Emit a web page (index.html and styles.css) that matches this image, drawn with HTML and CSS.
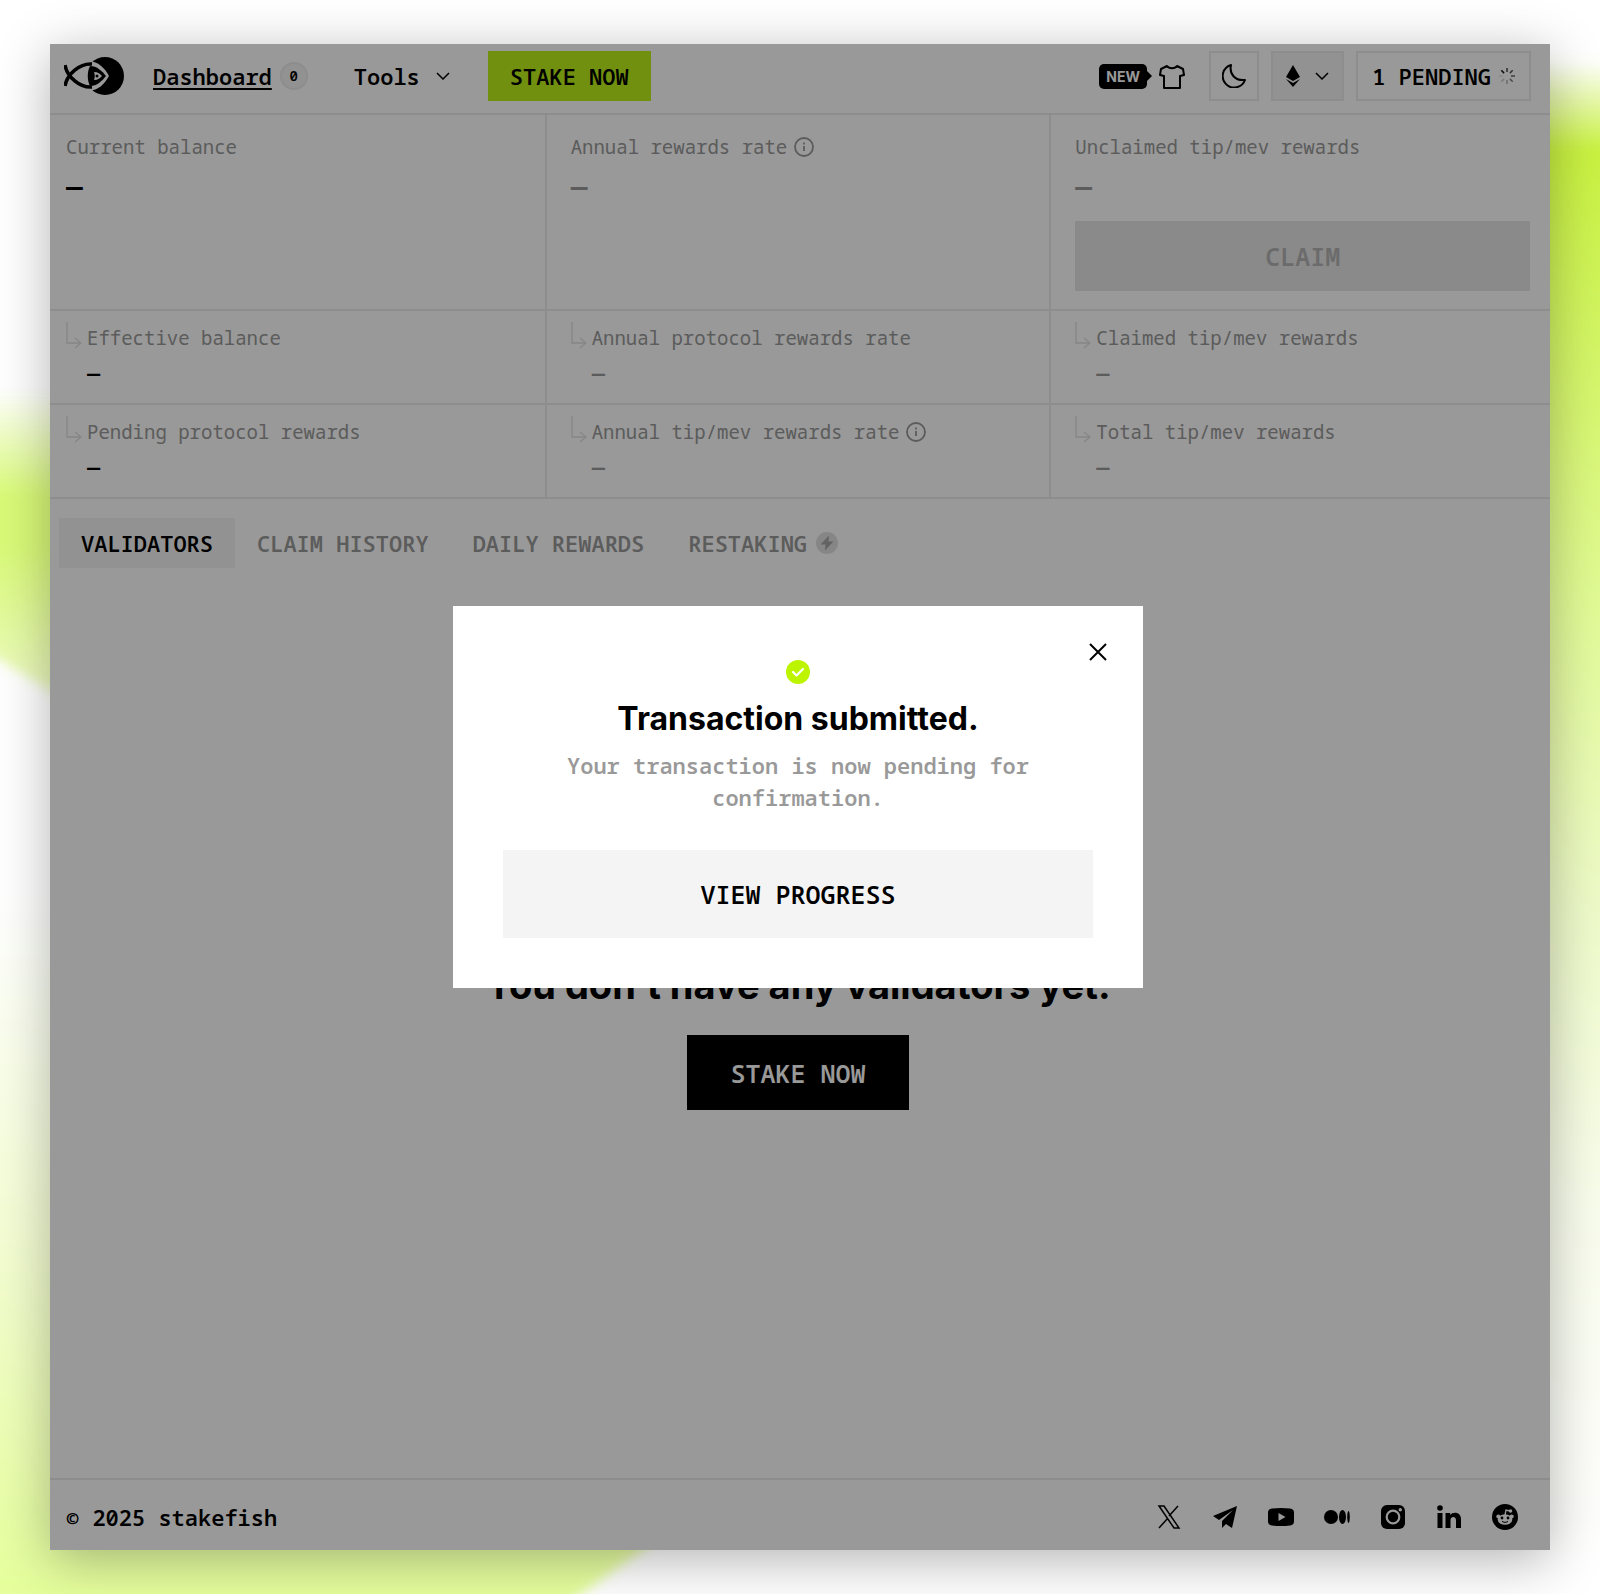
FILE: index.html
```
<!DOCTYPE html>
<html lang="en">
<head>
    <meta charset="UTF-8">
    <meta name="viewport" content="width=device-width,initial-scale=1.0">
    <title>Dashboard | stakefish</title>
    <link rel="stylesheet" href="styles.css">
</head>
<body>
    <svg class="sprite" aria-hidden="true">
        <symbol id="branch" viewBox="0 0 16 28">
            <path d="M1 0v21h14M9 16l6 5-6 5" fill="none" stroke="currentColor" stroke-width="1.4"/>
        </symbol>
        <symbol id="info" viewBox="0 0 20 20">
            <circle cx="10" cy="10" r="9" fill="none" stroke="currentColor" stroke-width="1.8"/>
            <path d="M10 9v5M10 5.6v1.8" stroke="currentColor" stroke-width="1.8"/>
        </symbol>
        <symbol id="chevron" viewBox="0 0 14 8">
            <path d="M1 1l6 6 6-6" fill="none" stroke="currentColor" stroke-width="1.5"/>
        </symbol>
    </svg>
    <div class="glow">
        <div class="blob blob-left"></div>
        <div class="blob blob-bottom"></div>
        <div class="blob blob-right"></div>
    </div>
    <div class="window">
        <header class="header">
            <a class="logo" href="#" aria-label="stakefish">
                <svg width="60" height="38" viewBox="0 0 60 38">
                    <circle cx="41" cy="19" r="19"/>
                    <path d="M20 5c12-3 20 5 25 14-5 9-13 17-25 14z" fill="#fff"/>
                    <path d="M28 7C16 6 3 17 1 29M1 8c2 12 15 23 27 22" fill="none" stroke="#000" stroke-width="3.5"/>
                    <path d="M26 9c7 0 12 5 16 10-4 5-9 10-16 10-3-6-3-14 0-20z"/>
                    <path d="M30 15c4 0 6 2 8 4-2 2-4 4-8 4 1-3 1-5 0-8z" fill="#fff"/>
                    <circle cx="33" cy="19" r="1.5"/>
                </svg>
            </a>
            <nav class="nav">
                <a class="nav-link active" href="#">Dashboard</a>
                <span class="count">0</span>
                <button class="nav-link tools" type="button">Tools <svg width="14" height="8"><use href="#chevron"/></svg></button>
                <button class="btn-stake" type="button">STAKE NOW</button>
            </nav>
            <div class="header-right">
                <a class="merch" href="#" aria-label="Merch">
                    <span class="new-tag">NEW</span>
                    <svg width="26" height="25" viewBox="0 0 26 25"><path d="M8 2c2 3 8 3 10 0l6 3 1 6-4 1v12H5V12l-4-1 1-6z" fill="none" stroke="#000" stroke-width="2" stroke-linejoin="round"/></svg>
                </a>
                <button class="btn-box" type="button" aria-label="Dark mode">
                    <svg width="24" height="24" viewBox="0 0 24 24"><path d="M9 1C7 10 13 17 23 16A11.500 11.500 0 1 1 9 1z" fill="none" stroke="#000" stroke-width="2" stroke-linejoin="round"/></svg>
                </button>
                <button class="btn-box network" type="button" aria-label="Network">
                    <svg width="14" height="22" viewBox="0 0 14 22"><path d="M7 0l7 12-7 4-7-4zM0 14l7 4 7-4-7 8z"/></svg>
                    <svg width="14" height="8"><use href="#chevron"/></svg>
                </button>
                <button class="btn-box pending" type="button">1 PENDING
                    <svg width="16" height="16" viewBox="0 0 16 16" stroke="#000" stroke-width="1.500">
                        <path d="M8 0v4" opacity=".7"/><path d="M13.700 2.300l-2.800 2.800" opacity=".65"/><path d="M16 8h-4" opacity=".6"/><path d="M13.700 13.700l-2.800-2.800" opacity=".5"/>
                        <path d="M8 16v-4" opacity=".3"/><path d="M2.300 13.700l2.800-2.800" opacity=".2"/><path d="M0 8h4" opacity=".1"/><path d="M2.300 2.300l2.800 2.800" opacity=".9"/>
                    </svg>
                </button>
            </div>
        </header>
        <main class="main">
            <section class="stats stats-top">
                <div class="stat">
                    <div class="stat-label">Current balance</div>
                    <div class="stat-value dark">—</div>
                </div>
                <div class="stat">
                    <div class="stat-label">Annual rewards rate <svg width="20" height="20"><use href="#info"/></svg></div>
                    <div class="stat-value">—</div>
                </div>
                <div class="stat">
                    <div class="stat-label">Unclaimed tip/mev rewards</div>
                    <div class="stat-value">—</div>
                    <button class="btn-claim" type="button" disabled>CLAIM</button>
                </div>
            </section>
            <section class="stats stats-sub">
                <div class="stat">
                    <svg class="branch" width="16" height="28"><use href="#branch"/></svg>
                    <div>
                        <div class="stat-label">Effective balance</div>
                        <div class="stat-value dark">—</div>
                    </div>
                </div>
                <div class="stat">
                    <svg class="branch" width="16" height="28"><use href="#branch"/></svg>
                    <div>
                        <div class="stat-label">Annual protocol rewards rate</div>
                        <div class="stat-value">—</div>
                    </div>
                </div>
                <div class="stat">
                    <svg class="branch" width="16" height="28"><use href="#branch"/></svg>
                    <div>
                        <div class="stat-label">Claimed tip/mev rewards</div>
                        <div class="stat-value">—</div>
                    </div>
                </div>
            </section>
            <section class="stats stats-sub">
                <div class="stat">
                    <svg class="branch" width="16" height="28"><use href="#branch"/></svg>
                    <div>
                        <div class="stat-label">Pending protocol rewards</div>
                        <div class="stat-value dark">—</div>
                    </div>
                </div>
                <div class="stat">
                    <svg class="branch" width="16" height="28"><use href="#branch"/></svg>
                    <div>
                        <div class="stat-label">Annual tip/mev rewards rate <svg width="20" height="20"><use href="#info"/></svg></div>
                        <div class="stat-value">—</div>
                    </div>
                </div>
                <div class="stat">
                    <svg class="branch" width="16" height="28"><use href="#branch"/></svg>
                    <div>
                        <div class="stat-label">Total tip/mev rewards</div>
                        <div class="stat-value">—</div>
                    </div>
                </div>
            </section>
            <div class="tabs">
                <button class="tab active" type="button">VALIDATORS</button>
                <button class="tab" type="button">CLAIM HISTORY</button>
                <button class="tab" type="button">DAILY REWARDS</button>
                <button class="tab" type="button">RESTAKING
                    <svg width="22" height="22" viewBox="0 0 22 22"><circle cx="11" cy="11" r="11" fill="#e0e0e0"/><path d="M13 3.500L4.500 12.500h5L9 18.500l8.500-9h-5z" fill="#a6a6a6"/></svg>
                </button>
            </div>
            <section class="empty">
                <h2 class="empty-title">You don’t have any validators yet.</h2>
                <button class="btn-dark" type="button">STAKE NOW</button>
            </section>
        </main>
        <footer class="footer">
            <div>© 2025 stakefish</div>
            <div class="social">
                <a href="#" aria-label="X"><svg viewBox="0 0 26 26"><path d="M3 2h5l15 22h-5zM22 2l-9 10M3 24l9-10" fill="none" stroke="#000" stroke-width="1.500"/></svg></a>
                <a href="#" aria-label="Telegram"><svg viewBox="0 0 26 26"><path d="M25 2L1 12l6 4L21 6 10 17v7l4-4 6 4z"/></svg></a>
                <a href="#" aria-label="YouTube"><svg viewBox="0 0 26 26"><path fill-rule="evenodd" d="M4 4.500Q13 3.500 22 4.500q4 .5 4 4v9q0 3.500-4 4-9 1-18 0-4-.5-4-4v-9q0-3.500 4-4zM10.500 9v8l7-4z"/></svg></a>
                <a href="#" aria-label="Medium"><svg viewBox="0 0 26 26"><circle cx="7" cy="13" r="7"/><ellipse cx="18.500" cy="13" rx="3.500" ry="7"/><ellipse cx="24.500" cy="13" rx="1.300" ry="6"/></svg></a>
                <a href="#" aria-label="Instagram"><svg viewBox="0 0 26 26"><rect x="1" y="1" width="24" height="24" rx="6"/><circle cx="13" cy="13" r="6.300" fill="none" stroke="#fff" stroke-width="2.200"/><circle cx="20.300" cy="5.700" r="1.700" fill="#fff"/></svg></a>
                <a href="#" aria-label="LinkedIn"><svg viewBox="0 0 26 26"><circle cx="4" cy="4" r="2.800"/><path d="M1.500 9h5v15h-5zM9.500 9h4.700v2c3-4 10.800-3 10.800 4v9h-5v-8c0-4-5.500-4-5.500 0v8h-5z"/></svg></a>
                <a href="#" aria-label="Reddit"><svg viewBox="0 0 26 26"><circle cx="13" cy="13" r="13"/><path d="M13 11l1-5 4 1" fill="none" stroke="#fff" stroke-width="1.300"/><g fill="#fff"><circle cx="18.500" cy="7" r="1.800"/><circle cx="6.300" cy="12.500" r="2"/><circle cx="19.700" cy="12.500" r="2"/><ellipse cx="13" cy="15.500" rx="7.300" ry="5.300"/></g><circle cx="10" cy="14" r="1.400"/><circle cx="16" cy="14" r="1.400"/><path d="M10 17.500q3 2 6 0" fill="none" stroke="#000"/></svg></a>
            </div>
        </footer>
        <div class="overlay">
            <div class="modal" role="dialog" aria-modal="true" aria-labelledby="modal-title">
                <button class="modal-close" type="button" aria-label="Close">
                    <svg width="18" height="18" viewBox="0 0 18 18"><path d="M1 1l16 16M17 1L1 17" stroke="#000" stroke-width="2"/></svg>
                </button>
                <svg width="24" height="24" viewBox="0 0 24 24"><circle cx="12" cy="12" r="12" fill="#bdf400"/><path d="M7 12l3.500 3.500L17 9" fill="none" stroke="#fff" stroke-width="2.200" stroke-linecap="round" stroke-linejoin="round"/></svg>
                <h1 class="modal-title" id="modal-title">Transaction submitted.</h1>
                <p class="modal-text">Your transaction is now pending for confirmation.</p>
                <button class="btn-progress" type="button">VIEW PROGRESS</button>
            </div>
        </div>
    </div>
</body>
</html>
```
FILE: styles.css
```
:root {
    --lime: #bdf01a;
    --line: #ebebeb;
    --gray-100: #f4f4f4;
    --gray-500: #999;
    --mono: 'Noto Sans Mono', 'DejaVu Sans Mono', monospace;
}
* {
    box-sizing: border-box;
}
body {
    position: relative;
    margin: 0;
    min-height: 100vh;
    padding: 44px 50px;
    display: flex;
    background: #fff;
    color: #000;
    font-family: var(--mono);
    font-size: 22px;
    font-weight: 600;
    overflow: hidden;
}
button {
    border: none;
    padding: 0;
    background: none;
    color: inherit;
    font: inherit;
    cursor: pointer;
}
a {
    color: inherit;
}
.sprite {
    position: absolute;
    width: 0;
    height: 0;
}
/* Background glow */
.glow {
    position: absolute;
    inset: 0;
    filter: blur(6px);
}
.blob {
    position: absolute;
}
.blob-left {
    left: -30px;
    top: 390px;
    width: 160px;
    height: 350px;
    background: linear-gradient(rgba(217,250,120,0), #d9fa78 30%, #d9fa78 45%, #edfbc0 85%);
    clip-path: polygon(0 0, 100% 0, 100% 100%, 0 72%);
}
.blob-bottom {
    left: -30px;
    right: 55%;
    top: 900px;
    bottom: -30px;
    background: linear-gradient(#fff, #f3fdd0 50%, #e6ff9c 95%);
    clip-path: polygon(0 0, 100% 0, 100% 82%, 76% 100%, 0 100%);
}
.blob-right {
    right: -30px;
    top: 60px;
    width: 120px;
    height: 1500px;
    background: linear-gradient(rgba(201,242,64,0), #c9f240 6%, #e2fb95 36%, #eefbc8 56%, #f9fdec 76%, #fff);
}
.window {
    position: relative;
    flex: 1;
    display: flex;
    flex-direction: column;
    background: #fff;
    box-shadow: 0 10px 50px rgba(0,0,0,0.3);
}
/* Header */
.header {
    display: flex;
    align-items: center;
    padding: 7px 19px 12px 14px;
    border-bottom: 2px solid var(--line);
}
.logo {
    display: flex;
    margin-right: 29px;
}
.nav {
    display: flex;
    align-items: center;
}
.nav-link {
    text-decoration: none;
}
.nav-link.active {
    text-decoration: underline;
    text-decoration-thickness: 2px;
    text-underline-offset: 3px;
}
.count {
    width: 28px;
    height: 28px;
    margin: 0 46px 0 8px;
    border: 2px solid var(--line);
    border-radius: 50%;
    background: var(--gray-100);
    font-size: 14px;
    line-height: 24px;
    text-align: center;
}
.tools {
    display: flex;
    align-items: center;
    gap: 16px;
    margin-right: 38px;
}
.btn-stake {
    height: 50px;
    padding: 0 22px;
    background: var(--lime);
}
.header-right {
    display: flex;
    align-items: center;
    gap: 12px;
    margin-left: auto;
}
.merch {
    display: flex;
    align-items: center;
    gap: 12px;
    margin-right: 12px;
    text-decoration: none;
}
.new-tag {
    position: relative;
    width: 48px;
    border-radius: 5px;
    background: #000;
    color: #fff;
    font-family: Inter, sans-serif;
    font-size: 14px;
    font-weight: 700;
    line-height: 25px;
    text-align: center;
}
.new-tag::after {
    content: "";
    position: absolute;
    left: 100%;
    top: 7px;
    border: 5px solid transparent;
    border-left-color: #000;
    border-right: none;
}
.btn-box {
    display: flex;
    align-items: center;
    justify-content: center;
    gap: 15px;
    min-width: 50px;
    height: 50px;
    border: 2px solid var(--line);
}
.network {
    padding: 0 13px;
    background: var(--gray-100);
}
.pending {
    gap: 8px;
    padding: 0 14px;
}
/* Stats */
.main {
    flex: 1;
    display: flex;
    flex-direction: column;
}
.stats {
    display: grid;
    grid-template-columns: repeat(3, 1fr);
    gap: 50px;
    padding: 0 20px 0 16px;
    border-bottom: 2px solid var(--line);
}
.stat + .stat {
    margin-left: -26px;
    padding-left: 24px;
    border-left: 2px solid var(--line);
}
.stat-label {
    display: flex;
    align-items: center;
    gap: 7px;
    color: var(--gray-500);
    font-size: 19px;
    font-weight: 400;
    line-height: 24px;
}
.stat-value {
    color: var(--gray-500);
    font-size: 28px;
    line-height: 32px;
}
.stat-value.dark {
    color: #000;
}
.stats-top .stat {
    padding-top: 20px;
    padding-bottom: 18px;
}
.stats-top .stat-value {
    margin: 10px 0 20px;
}
.btn-claim {
    width: 100%;
    height: 70px;
    background: #e6e6e6;
    color: #b3b3b3;
    font-size: 25px;
}
.stats-sub .stat {
    display: flex;
    gap: 5px;
    padding-top: 11px;
    padding-bottom: 17px;
}
.stats-sub .stat-label {
    margin: 4px 0 8px;
}
.stats-sub .stat-value {
    font-size: 22px;
    line-height: 28px;
}
.branch {
    color: #e0e0e0;
}
/* Tabs */
.tabs {
    display: flex;
    padding: 19px 9px;
}
.tab {
    display: flex;
    align-items: center;
    gap: 9px;
    height: 50px;
    padding: 0 22px;
    color: var(--gray-500);
}
.tab.active {
    background: var(--gray-100);
    color: #000;
}
.empty {
    flex: 1;
    display: flex;
    flex-direction: column;
    align-items: center;
    justify-content: center;
    gap: 26px;
    padding: 6px 4px 0 0;
}
.empty-title {
    margin: 0;
    font-family: Inter, sans-serif;
    font-size: 38px;
    font-weight: 700;
    line-height: 48px;
}
.btn-dark {
    height: 75px;
    padding: 0 43px;
    background: #000;
    color: #fff;
    font-size: 25px;
}
/* Footer */
.footer {
    display: flex;
    align-items: center;
    justify-content: space-between;
    padding: 22px 32px 18px 16px;
    border-top: 2px solid var(--line);
}
.social {
    display: flex;
    gap: 30px;
}
.social a {
    display: flex;
}
.social svg {
    width: 26px;
    height: 26px;
}
/* Modal */
.overlay {
    position: absolute;
    inset: 0;
    display: flex;
    align-items: center;
    justify-content: center;
    padding-right: 4px;
    background: rgba(0,0,0,0.4);
}
.modal {
    position: relative;
    display: flex;
    flex-direction: column;
    align-items: center;
    width: 690px;
    max-width: 90%;
    padding: 54px 50px 50px;
    background: #fff;
}
.modal-close {
    position: absolute;
    top: 37px;
    right: 36px;
    display: flex;
}
.modal-title {
    margin: 14px 0 9px;
    font-family: Inter, sans-serif;
    font-size: 32px;
    font-weight: 700;
    line-height: 42px;
}
.modal-text {
    margin: 0 0 37px;
    padding: 0 50px;
    color: var(--gray-500);
    line-height: 32px;
    text-align: center;
}
.btn-progress {
    width: 100%;
    height: 88px;
    background: var(--gray-100);
    font-size: 25px;
}
```
